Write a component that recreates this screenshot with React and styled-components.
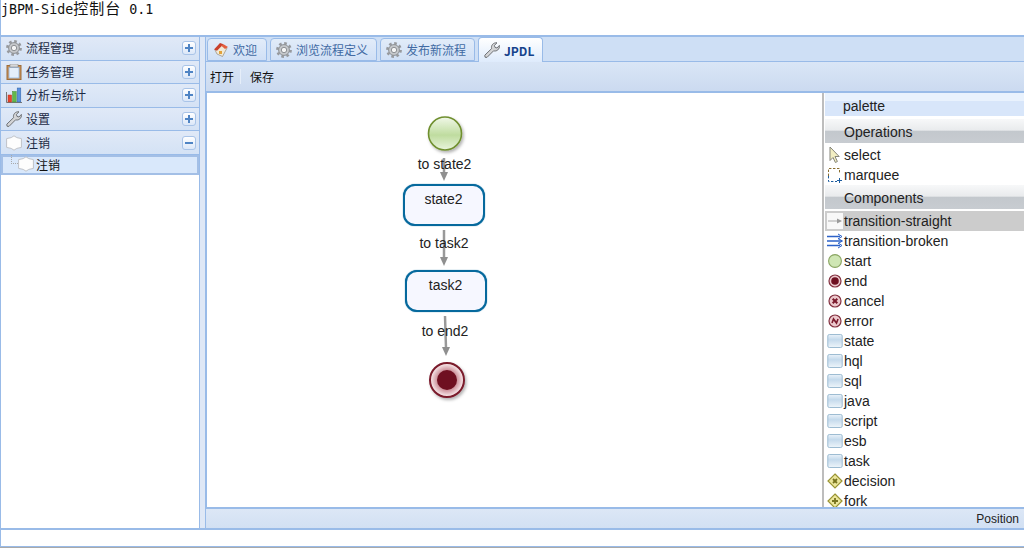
import React from "react";
import styled, { createGlobalStyle } from "styled-components";

const GlobalStyle = createGlobalStyle`
  html, body { margin: 0; padding: 0; background: #fff; overflow: hidden; }
  body { font-family: "Noto Sans CJK SC", "Liberation Sans", sans-serif; }
`;

const BLUE = "#99bbe8";

const Viewport = styled.div`
  width: 1024px;
  height: 548px;
  box-sizing: border-box;
  display: flex;
  flex-direction: column;
  background: #fff;
  overflow: hidden;
  border-bottom: 1px solid #a9a9a9;
`;

const Header = styled.div`
  height: 35px;
  flex: none;
  border-left: 1px solid ${BLUE};
  border-bottom: 2px solid ${BLUE};
  color: #111;
  font-family: "DejaVu Sans Mono", monospace;
  font-size: 13.33px;
  line-height: 15px;
  white-space: pre;
  span {
    font-family: "Noto Sans CJK SC", sans-serif;
    font-size: 15px;
    letter-spacing: 1px;
    line-height: 15px;
  }
`;

const Middle = styled.div`
  flex: none;
  height: 491px;
  display: flex;
  background: #dfe8f6;
`;

const West = styled.div`
  width: 198px;
  flex: none;
  border: 1px solid ${BLUE};
  border-top: none;
  border-bottom: none;
  background: #fff;
`;

const AccordionRow = styled.div`
  height: 22.6px;
  border-bottom: 1px solid ${BLUE};
  background: linear-gradient(#e0e9f7, #d4e2f5);
  display: flex;
  align-items: center;
  padding: 0 3px 0 5px;
  font-size: 12px;
  gap: 4px;
`;

const RowLabel = styled.span`
  flex: 1;
  margin-top: -1px;
  color: #1c2a44;
`;

const ToggleBox = styled.span`
  width: 12px;
  height: 12px;
  border: 1px solid #a9c4e8;
  border-radius: 3px;
  background: linear-gradient(#fff, #dbe7f8);
  position: relative;
  &::before {
    content: "";
    position: absolute;
    left: 2px;
    right: 2px;
    top: 5px;
    height: 2px;
    background: #4f84c4;
  }
  &::after {
    content: "";
    display: ${(p) => (p.$open ? "none" : "block")};
    position: absolute;
    top: 2px;
    bottom: 2px;
    left: 5px;
    width: 2px;
    background: #4f84c4;
  }
`;

const TreeNode = styled.div`
  height: 15px;
  padding-bottom: 1px;
  border: 2px solid #a3bfe6;
  background: #d9e8fb;
  display: flex;
  align-items: center;
  padding-left: 8px;
  font-size: 12px;
  color: #111;
  gap: 2px;
  &::before {
    content: "";
    width: 6px;
    height: 8px;
    margin-top: -9px;
    margin-right: -2px;
    border-left: 1px dotted #a9a9a9;
    border-bottom: 1px dotted #a9a9a9;
    flex: none;
  }
`;

const Splitter = styled.div`
  width: 5px;
  flex: none;
  background: #dfe8f6;
`;

const Center = styled.div`
  flex: 1;
  display: flex;
  flex-direction: column;
  min-width: 0;
  border-left: 1px solid ${BLUE};
`;

const TabStrip = styled.div`
  height: 24px;
  flex: none;
  background: #cedff5;
  border-bottom: 1px solid ${BLUE};
  display: flex;
  align-items: flex-end;
  padding-left: 1px;
  gap: 3px;
`;

const Tab = styled.div`
  height: ${(p) => (p.$active ? "25px" : "23px")};
  margin-bottom: ${(p) => (p.$active ? "-1px" : "0")};
  width: ${(p) => p.$w}px;
  box-sizing: border-box;
  border: 1px solid ${BLUE};
  border-bottom: ${(p) => (p.$active ? "none" : `1px solid ${BLUE}`)};
  border-radius: 4px 4px 0 0;
  background: ${(p) => (p.$active ? "linear-gradient(#fff, #deebfc)" : "linear-gradient(#e2ecf9, #d0e0f6)")};
  display: flex;
  align-items: center;
  gap: 4px;
  padding-left: 5px;
  font-size: 12px;
  font-weight: ${(p) => (p.$active ? 700 : 400)};
  color: ${(p) => (p.$active ? "#15428b" : "#416aa3")};
`;

const Toolbar = styled.div`
  height: 29px;
  flex: none;
  background: linear-gradient(#dae6f6, #cbdaf0);
  border-bottom: 2px solid ${BLUE};
  display: flex;
  align-items: center;
  font-size: 12px;
  color: #111;
  padding-left: 4px;
`;

const ToolSep = styled.span`
  width: 1px;
  height: 15px;
  background: #e6eef9;
  margin: 0 9px 0 6px;
`;

const Body = styled.div`
  flex: 1;
  display: flex;
  min-height: 0;
  background: #fff;
  border-left: 1px solid ${BLUE};
`;

const Canvas = styled.div`
  flex: 1;
  position: relative;
  min-width: 0;
`;

const Edges = styled.svg`
  position: absolute;
  left: 0;
  top: 0;
`;

const Node = styled.div`
  position: absolute;
  left: ${(p) => p.$x}px;
  top: ${(p) => p.$y}px;
  width: 78px;
  height: 38px;
  border: 2px solid #06699d;
  border-radius: 12px;
  box-shadow: 0 0 1px #06699d;
  background: #f6f7ff;
  font: 14px "Liberation Sans", sans-serif;
  line-height: 27px;
  text-align: center;
  color: #222;
`;

const EdgeLabel = styled.div`
  position: absolute;
  left: ${(p) => p.$x - 60}px;
  top: ${(p) => p.$y - 10}px;
  width: 120px;
  text-align: center;
  font: 14px "Liberation Sans", sans-serif;
  line-height: 20px;
  color: #222;
`;

const Palette = styled.div`
  width: 199px;
  flex: none;
  border-left: 2px solid #bdbdbd;
  padding-left: 1px;
  overflow: hidden;
  font: 14px "Liberation Sans", sans-serif;
  color: #222;
`;

const PaletteTitle = styled.div`
  height: 23px;
  line-height: 26px;
  padding-left: 18px;
  margin-bottom: 3px;
  background: linear-gradient(#e9f2fd 0 8px, #d8e6fa 8px);
`;

const Drawer = styled.div`
  height: 24px;
  line-height: 26px;
  padding-left: 19px;
  margin-bottom: ${(p) => p.$gap}px;
  background: linear-gradient(#f7f8f9 0, #e9ebed 46%, #c3c8cd 52%, #c8ccd1 100%);
`;

const PaletteRow = styled.div`
  height: 20px;
  display: flex;
  align-items: center;
  gap: 1px;
  padding-left: 2px;
  line-height: 20px;
  background: ${(p) => (p.$active ? "#cccccc" : "transparent")};
  svg { flex: none; }
`;

const Status = styled.div`
  height: 19px;
  flex: none;
  border-top: 2px solid ${BLUE};
  background: linear-gradient(#dce7f6, #d2e0f3);
  text-align: right;
  padding-right: 5px;
  font: 12px/21px "Liberation Sans", sans-serif;
  color: #222;
`;

const Footer = styled.div`
  flex: 1;
  border-left: 1px solid ${BLUE};
  border-top: 2px solid ${BLUE};
  border-bottom: 1px solid ${BLUE};
  background: #fff;
`;

const Gear = () => (
  <svg width="16" height="16" viewBox="0 0 16 16">
    <circle cx="8" cy="8" r="6.6" fill="none" stroke="#97999d" strokeWidth="2.6" strokeDasharray="2.6 2.58" />
    <circle cx="8" cy="8" r="5.4" fill="#c6c8cb" stroke="#8d9094" strokeWidth="1" />
    <circle cx="8" cy="8" r="2.7" fill="#f4f4f4" stroke="#8d9094" strokeWidth="1" />
  </svg>
);

const Clipboard = () => (
  <svg width="16" height="16" viewBox="0 0 16 16">
    <rect x="1" y="1.5" width="14" height="14" fill="#c98f52" stroke="#9c6c3a" />
    <rect x="3" y="3.5" width="10" height="10.5" fill="#e4eefa" stroke="#8fb3de" strokeWidth="0.8" />
    <rect x="4" y="0" width="8" height="3" fill="#d6d8da" stroke="#8d8d8d" strokeWidth="0.6" />
  </svg>
);

const Bars = () => (
  <svg width="16" height="16" viewBox="0 0 16 16">
    <path d="M0.5 5v10.5H16" fill="none" stroke="#777" />
    <rect x="2" y="8" width="3.6" height="7" fill="#e8452c" stroke="#b8321e" strokeWidth="0.5" />
    <rect x="6.6" y="4.5" width="3.6" height="10.5" fill="#62b84c" stroke="#3f8a2e" strokeWidth="0.5" />
    <rect x="11.2" y="1" width="3.6" height="14" fill="#5b92dd" stroke="#2f62a8" strokeWidth="0.5" />
  </svg>
);

const Wrench = () => (
  <svg width="16" height="16" viewBox="0 0 16 16">
    <path
      d="M0.8 13.2 7.6 6.6C6.8 3.4 9.2 0.4 13 0.8L10.4 3.4 11 5.4 13 6 15.4 3.4C15.9 7.2 12.6 9.8 9.6 8.8L3 15.4 1 15.2Z"
      fill="#d3d4d6"
      stroke="#6f7276"
      strokeWidth="1"
      strokeLinejoin="round"
    />
  </svg>
);

const Blob = () => (
  <svg width="16" height="16" viewBox="0 0 16 16">
    <path
      d="M0.6 3.6 5.2 2.6 8 0.8 10.8 2.6 15.4 3.6V12.4L10.8 13.4 8 15.2 5.2 13.4 0.6 12.4Z"
      fill="#fdfdfd"
      stroke="#bfc2c8"
      strokeLinejoin="round"
    />
  </svg>
);

const House = () => (
  <svg width="16" height="16" viewBox="0 0 16 16">
    <path d="M2 8 8 2.5l6 3.5-4.5 8.5-5.5-2.5Z" fill="#f0ead8" stroke="#8a7a66" strokeWidth="0.6" />
    <path d="M1 7.5 7 1l3.5 1.2-6.5 6.6Z" fill="#c9402c" />
    <path d="M10.5 2.2 15 5l-3 2-4-3.4Z" fill="#e25f3f" />
    <rect x="6" y="9" width="3" height="3" fill="#e2a23a" />
  </svg>
);

const ToolIcon = ({ kind }) => {
  if (kind === "select")
    return (
      <svg width="16" height="18" viewBox="0 0 16 18">
        <path d="M3 1v13.5l3-3 2.4 5 2-1-2.4-5h4.2Z" fill="#f2eec2" stroke="#85857a" strokeWidth="1" />
      </svg>
    );
  if (kind === "marquee")
    return (
      <svg width="16" height="16" viewBox="0 0 16 16">
        <path d="M1.5 9V1.5h11V7" fill="none" stroke="#8a6d2e" strokeDasharray="2.4 1.6" />
        <path d="M1.5 9v5.5H10" fill="none" stroke="#1d5d9f" strokeDasharray="2.4 1.6" />
        <path d="M10 13.5h5M12.5 11v5" stroke="#1d5d9f" />
      </svg>
    );
  if (kind === "straight")
    return (
      <svg width="16" height="16" viewBox="0 0 16 16">
        <rect width="16" height="16" fill="#f8f8f8" />
        <path d="M1 8h10" stroke="#a8a8a8" />
        <path d="M10 5.5 15 8l-5 2.5Z" fill="#9a9a9a" />
      </svg>
    );
  if (kind === "broken")
    return (
      <svg width="16" height="16" viewBox="0 0 16 16">
        <path d="M0 3.5h13M0 8h15M0 12.5h13" stroke="#2c62c8" strokeWidth="1.3" />
        <path d="M11 1l4 2.5-4 2.5M11 5.5l4.5 2.5-4.5 2.5M11 10l4 2.5-4 2.5" fill="none" stroke="#2c62c8" />
      </svg>
    );
  if (kind === "start")
    return (
      <svg width="16" height="16" viewBox="0 0 16 16">
        <circle cx="8" cy="8" r="6.4" fill="#cfe6b4" stroke="#8aa562" strokeWidth="1.1" />
      </svg>
    );
  if (kind === "end" || kind === "cancel" || kind === "error")
    return (
      <svg width="16" height="16" viewBox="0 0 16 16">
        <circle cx="8" cy="8" r="6" fill="#ecc9cd" stroke="#83303f" strokeWidth="1.2" />
        {kind === "end" && <circle cx="8" cy="8" r="3.8" fill="#6f1021" />}
        {kind === "cancel" && <path d="M5.7 5.7l4.6 4.6M10.3 5.7l-4.6 4.6" stroke="#7a1a2c" strokeWidth="2" />}
        {kind === "error" && <path d="M5 10 6.5 6 9.5 10 11 6" fill="none" stroke="#7a1a2c" strokeWidth="1.6" />}
      </svg>
    );
  if (kind === "decision" || kind === "fork")
    return (
      <svg width="16" height="16" viewBox="0 0 16 16">
        <path d="M8 1 15 8 8 15 1 8Z" fill="#ece69c" stroke="#9a9434" strokeWidth="1.2" />
        {kind === "decision" ? (
          <path d="M6 6l4 4M10 6l-4 4" stroke="#77731f" strokeWidth="1.8" />
        ) : (
          <path d="M8 5v6M5 8h6" stroke="#77731f" strokeWidth="1.8" />
        )}
      </svg>
    );
  return (
    <svg width="16" height="16" viewBox="0 0 16 16">
      <defs>
        <linearGradient id="boxFill" x1="0" y1="0" x2="0" y2="1">
          <stop offset="0" stopColor="#eaf2f9" />
          <stop offset="0.4" stopColor="#c4daec" />
          <stop offset="1" stopColor="#eef5fa" />
        </linearGradient>
      </defs>
      <rect x="0.8" y="1.5" width="14.4" height="13" rx="1.5" fill="url(#boxFill)" stroke="#9dbcd2" />
    </svg>
  );
};

const menus = [
  { label: "流程管理", icon: <Gear /> },
  { label: "任务管理", icon: <Clipboard /> },
  { label: "分析与统计", icon: <Bars /> },
  { label: "设置", icon: <Wrench /> },
  { label: "注销", icon: <Blob />, open: true },
];

const tabs = [
  { label: "欢迎", icon: <House />, w: 60 },
  { label: "浏览流程定义", icon: <Gear />, w: 107 },
  { label: "发布新流程", icon: <Gear />, w: 95 },
  { label: "JPDL", icon: <Wrench />, w: 65, active: true },
];

const tools = [
  ["select", "select"],
  ["marquee", "marquee"],
];

const components = [
  ["straight", "transition-straight", true],
  ["broken", "transition-broken"],
  ["start", "start"],
  ["end", "end"],
  ["cancel", "cancel"],
  ["error", "error"],
  ["box", "state"],
  ["box", "hql"],
  ["box", "sql"],
  ["box", "java"],
  ["box", "script"],
  ["box", "esb"],
  ["box", "task"],
  ["decision", "decision"],
  ["fork", "fork"],
];

// canvas origin is at (207, 93) in the page
const Diagram = () => (
  <Canvas>
    <Edges width="615" height="414" viewBox="207 93 615 414">
      <defs>
        <linearGradient id="startFill" x1="0" y1="0" x2="0" y2="1">
          <stop offset="0" stopColor="#f1f8e9" />
          <stop offset="0.55" stopColor="#bfdc9f" />
          <stop offset="1" stopColor="#e9f4dc" />
        </linearGradient>
        <radialGradient id="endFill">
          <stop offset="0.55" stopColor="#c98a94" />
          <stop offset="1" stopColor="#fdf3f4" />
        </radialGradient>
        <filter id="soft" x="-30%" y="-30%" width="170%" height="170%">
          <feDropShadow dx="1.5" dy="2" stdDeviation="1.5" floodColor="#000" floodOpacity="0.3" />
        </filter>
      </defs>
      <circle cx="445" cy="133.5" r="16.5" fill="url(#startFill)" stroke="#6f8f2f" strokeWidth="1.6" filter="url(#soft)" />
      <path d="M444 158V174" stroke="#999" strokeWidth="2.5" />
      <path d="M440 172h8l-4 9Z" fill="#8f8f8f" />
      <path d="M444 230V258" stroke="#999" strokeWidth="2.5" />
      <path d="M440 257h8l-4 9Z" fill="#8f8f8f" />
      <path d="M445 316 446 348" stroke="#999" strokeWidth="2.5" />
      <path d="M442 347h8l-4 9Z" fill="#8f8f8f" />
      <circle cx="447" cy="380" r="17" fill="url(#endFill)" stroke="#7a1a2c" strokeWidth="2" filter="url(#soft)" />
      <circle cx="447" cy="380" r="10" fill="#6f1021" />
    </Edges>
    <EdgeLabel $x={237.5} $y={71}>to state2</EdgeLabel>
    <Node $x={195.5} $y={91}>state2</Node>
    <EdgeLabel $x={237} $y={150}>to task2</EdgeLabel>
    <Node $x={197.5} $y={177}>task2</Node>
    <EdgeLabel $x={238} $y={238}>to end2</EdgeLabel>
  </Canvas>
);

export default function App() {
  return (
    <Viewport>
      <GlobalStyle />
      <Header>
        jBPM-Side<span>控制台</span> 0.1
      </Header>
      <Middle>
        <West>
          {menus.map((m) => (
            <AccordionRow key={m.label}>
              {m.icon}
              <RowLabel>{m.label}</RowLabel>
              <ToggleBox $open={m.open} />
            </AccordionRow>
          ))}
          <TreeNode>
            <Blob />
            注销
          </TreeNode>
        </West>
        <Splitter />
        <Center>
          <TabStrip>
            {tabs.map((t) => (
              <Tab key={t.label} $w={t.w} $active={t.active}>
                {t.icon}
                {t.label}
              </Tab>
            ))}
          </TabStrip>
          <Toolbar>
            打开
            <ToolSep />
            保存
          </Toolbar>
          <Body>
            <Diagram />
            <Palette>
              <PaletteTitle>palette</PaletteTitle>
              <Drawer $gap={2}>Operations</Drawer>
              {tools.map(([kind, label]) => (
                <PaletteRow key={label}>
                  <ToolIcon kind={kind} />
                  {label}
                </PaletteRow>
              ))}
              <Drawer $gap={2}>Components</Drawer>
              {components.map(([kind, label, active]) => (
                <PaletteRow key={label} $active={active}>
                  <ToolIcon kind={kind} />
                  {label}
                </PaletteRow>
              ))}
            </Palette>
          </Body>
          <Status>Position</Status>
        </Center>
      </Middle>
      <Footer />
    </Viewport>
  );
}
